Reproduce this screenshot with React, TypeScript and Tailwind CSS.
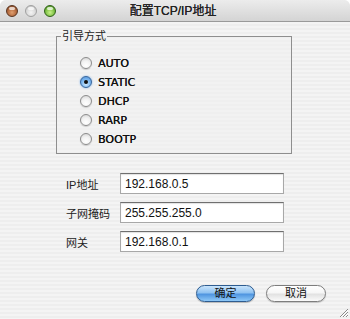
import React from 'react';

const font = "font-['Liberation_Sans','Noto_Sans_CJK_SC',sans-serif]";

const modes = ['AUTO', 'STATIC', 'DHCP', 'RARP', 'BOOTP'];

const fields = [
  { label: 'IP地址', value: '192.168.0.5' },
  { label: '子网掩码', value: '255.255.255.0' },
  { label: '网关', value: '192.168.0.1' },
];

function TrafficLight({ kind }: { kind: 'close' | 'min' | 'zoom' }) {
  const fill =
    kind === 'close'
      ? 'bg-[radial-gradient(circle_at_50%_65%,#e0a070_0%,#b0673c_55%,#6e3b22_100%)] border-[#5a3520]'
      : kind === 'min'
        ? 'bg-[radial-gradient(circle_at_50%_65%,#f4f4f4_0%,#d6d6d6_60%,#b2b2b2_100%)] border-[#a0a0a0]'
        : 'bg-[radial-gradient(circle_at_50%_65%,#c8ef8a_0%,#7cc043_55%,#3c7a1c_100%)] border-[#2f5f18]';
  return (
    <div className={`relative w-[12px] h-[12px] rounded-full border ${fill}`}>
      <div className="absolute left-[2px] top-[1px] w-[6px] h-[3px] rounded-full bg-white/70" />
    </div>
  );
}

function Radio({ checked }: { checked?: boolean }) {
  if (checked) {
    return (
      <div className="w-[12px] h-[12px] rounded-full border border-[#35659c] bg-[radial-gradient(circle_at_50%_70%,#d3ecff_0%,#7db8f0_50%,#4f8fd8_100%)] flex items-center justify-center shadow-[0_0_2px_#6fa8e8]">
        <div className="w-[4px] h-[4px] rounded-full bg-[#111]" />
      </div>
    );
  }
  return (
    <div className="w-[12px] h-[12px] rounded-full border border-[#8c8c8c] bg-[radial-gradient(circle_at_50%_75%,#ffffff_0%,#f2f2f2_50%,#cfcfcf_100%)] shadow-[0_1px_1px_rgba(0,0,0,0.15)]" />
  );
}

export default function App() {
  return (
    <div
      className={`${font} relative w-[350px] h-[319px] overflow-hidden rounded-t-[6px] text-[#111] bg-[repeating-linear-gradient(to_bottom,#eeeeee_0px,#eeeeee_2px,#f4f4f4_2px,#f4f4f4_4px)]`}
    >
      {/* title bar */}
      <div className="h-[22px] flex items-center border-b border-[#9a9a9a] bg-[linear-gradient(to_bottom,#ececec,#d4d4d4)]">
        <div className="w-[58px] flex items-center gap-[7px] pl-[6px]">
          <TrafficLight kind="close" />
          <TrafficLight kind="min" />
          <TrafficLight kind="zoom" />
        </div>
        <div className="flex-1 text-center text-[12px] leading-none text-[#222] [text-shadow:0.1px_0_0_#222]">配置TCP/IP地址</div>
        <div className="w-[62px]" />
      </div>

      {/* boot method group */}
      <fieldset className="ml-[56px] mt-[7px] w-[236px] h-[125px] border border-[#8e8e8e] bg-[#f0f0f0]/40">
        <legend className="ml-[4px] px-[1px] text-[11px] leading-[14px] text-[#222]">引导方式</legend>
        <div className="flex flex-col gap-[7px] pl-[23px] pt-[14px]">
          {modes.map((m) => (
            <div key={m} className="flex items-center gap-[6px] h-[12px]">
              <Radio checked={m === 'STATIC'} />
              <span className="text-[11px] leading-none font-['DejaVu_Sans',sans-serif] [text-shadow:0.2px_0_0_#111]">{m}</span>
            </div>
          ))}
        </div>
      </fieldset>

      {/* address fields */}
      <div className="mt-[19px] ml-[66px] flex flex-col gap-[8px]">
        {fields.map((f) => (
          <div key={f.label} className="flex items-center">
            <div className="w-[54px] pt-[4px] text-[11px] leading-none text-[#222]">{f.label}</div>
            <div className="w-[164px] h-[21px] bg-white border border-[#a8a8a8] border-t-[#6f6f6f] shadow-[inset_0_1px_1px_rgba(0,0,0,0.12)] flex items-center pl-[4px] text-[12px]">
              {f.value}
            </div>
          </div>
        ))}
      </div>

      {/* buttons */}
      <div className="mt-[33px] ml-[196px] flex gap-[11px]">
        <button className="w-[59px] h-[17px] rounded-full border border-[#2e5c90] bg-[linear-gradient(to_bottom,#c9e4fb_0%,#8fc2f1_45%,#4f95e0_55%,#8ec8f7_100%)] text-[11px] leading-none shadow-[0_1px_1px_rgba(0,0,0,0.25)]">
          确定
        </button>
        <button className="w-[60px] h-[17px] rounded-full border border-[#7d7d7d] bg-[linear-gradient(to_bottom,#ffffff_0%,#f6f6f6_45%,#e2e2e2_55%,#fafafa_100%)] text-[11px] leading-none shadow-[0_1px_1px_rgba(0,0,0,0.2)]">
          取消
        </button>
      </div>

      {/* resize grip */}
      <svg className="absolute right-[1px] bottom-[1px]" width="11" height="11" viewBox="0 0 11 11">
        <path d="M10 2 L2 10 M10 5 L5 10 M10 8 L8 10" stroke="#8a8a8a" strokeWidth="1" />
        <path d="M10 3 L3 10 M10 6 L6 10 M10 9 L9 10" stroke="#ffffff" strokeWidth="1" />
      </svg>
    </div>
  );
}
